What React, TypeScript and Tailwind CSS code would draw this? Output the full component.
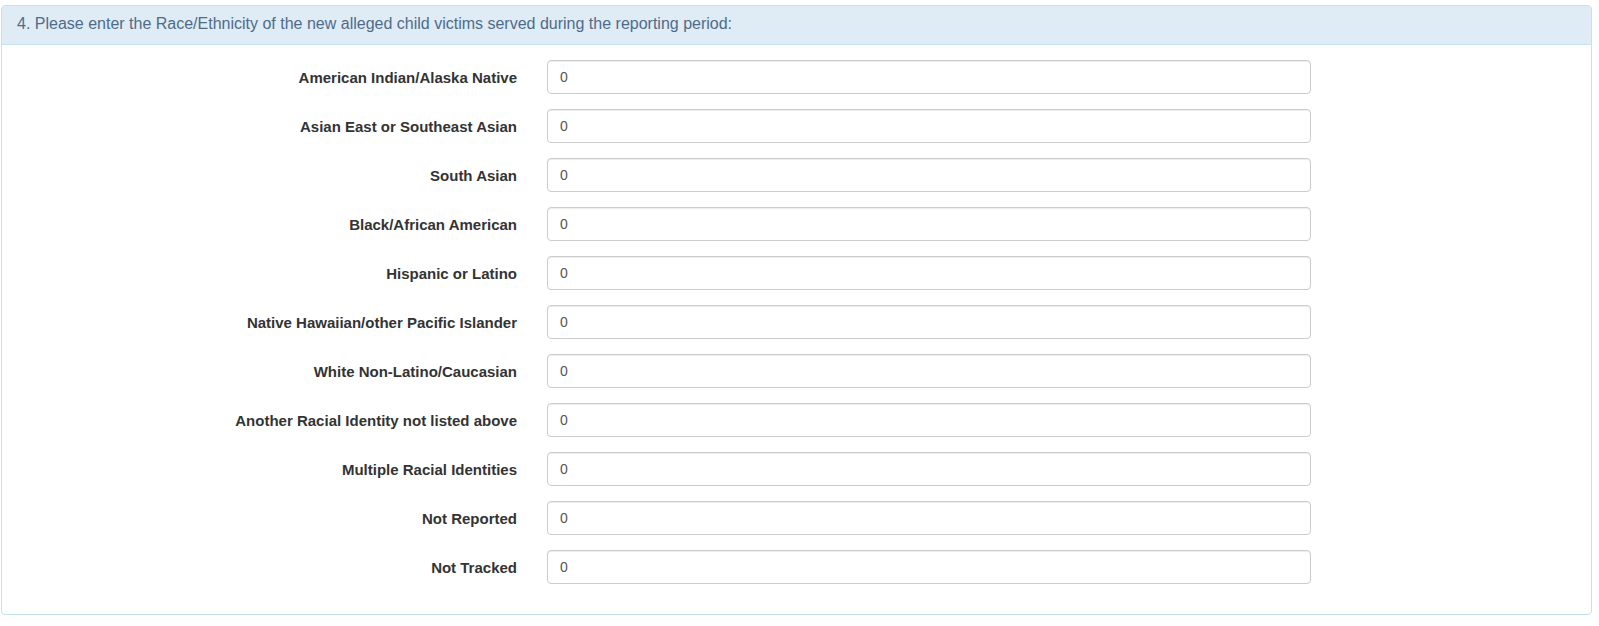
import React from 'react';

const rows: string[] = [
  'American Indian/Alaska Native',
  'Asian East or Southeast Asian',
  'South Asian',
  'Black/African American',
  'Hispanic or Latino',
  'Native Hawaiian/other Pacific Islander',
  'White Non-Latino/Caucasian',
  'Another Racial Identity not listed above',
  'Multiple Racial Identities',
  'Not Reported',
  'Not Tracked',
];

const FieldRow: React.FC<{ label: string }> = ({ label }) => {
  return (
    <div className="flex items-start mb-[15px]">
      <label className="w-[515px] shrink-0 pt-[8px] text-right text-[15px] leading-5 font-bold text-[#333]">
        {label}
      </label>
      <input
        type="text"
        defaultValue="0"
        className="ml-[30px] w-[764px] h-[34px] px-3 text-[14px] text-[#555] bg-white border border-[#ccc] rounded-[4px] shadow-[inset_0_1px_1px_rgba(0,0,0,0.075)] focus:outline-none"
      />
    </div>
  );
};

export default function App() {
  return (
    <div
      className="bg-white min-h-[626px] pt-[5px] pl-[1px] pr-[7px]"
      style={{ fontFamily: '"Liberation Sans", Arial, sans-serif' }}
    >
      <div className="border border-[#c4e1ef] rounded-[4px] bg-white">
        <div className="bg-[#dfecf6] border-b border-[#c4e1ef] rounded-t-[3px] px-[15px] pt-[9px] pb-[11px] text-[16px] leading-[18px] text-[#4f6b8a]">
          4. Please enter the Race/Ethnicity of the new alleged child victims served during the reporting period:
        </div>
        <div className="pt-[15px] pb-[15px]">
          {rows.map((r) => (
            <FieldRow key={r} label={r} />
          ))}
        </div>
      </div>
    </div>
  );
}
